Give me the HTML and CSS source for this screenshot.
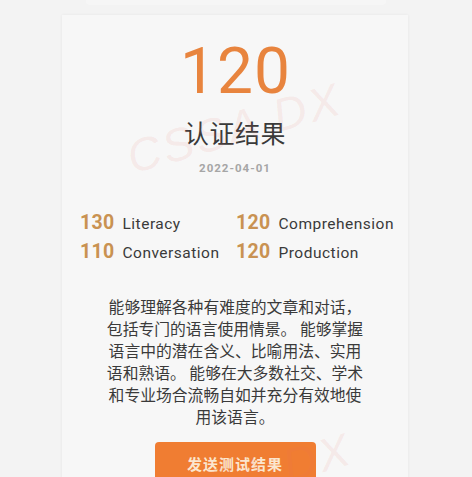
FILE: index.html
```html
<!DOCTYPE html>
<html lang="zh">
<head>
<meta charset="utf-8">
<title>认证结果</title>
<link rel="stylesheet" href="styles.css">
</head>
<body>
<div class="topbar"></div>
<main class="card">
  <div class="score">120</div>
  <h1 class="title">认证结果</h1>
  <div class="date">2022-04-01</div>
  <div class="stats">
    <div class="stat"><span class="num">130</span><span class="label">Literacy</span></div>
    <div class="stat"><span class="num">120</span><span class="label">Comprehension</span></div>
    <div class="stat"><span class="num">110</span><span class="label">Conversation</span></div>
    <div class="stat"><span class="num">120</span><span class="label">Production</span></div>
  </div>
  <p class="desc">能够理解各种有难度的文章和对话，包括专门的语言使用情景。 能够掌握语言中的潜在含义、比喻用法、实用语和熟语。 能够在大多数社交、学术和专业场合流畅自如并充分有效地使用该语言。</p>
  <button class="send">发送测试结果</button>
  <div class="watermark wm1">CSSA DX</div>
  <div class="watermark wm2">CSSA DX</div>
</main>
</body>
</html>
```
FILE: styles.css
```css
html, body {
  margin: 0;
  padding: 0;
}
body {
  background: #f3f3f3;
  height: 477px;
  overflow: hidden;
  font-family: Roboto, "Noto Sans CJK SC", sans-serif;
}
.topbar {
  width: 300px;
  height: 5px;
  margin: 0 auto;
  background: #f6f6f6;
  border-radius: 0 0 4px 4px;
}
.card {
  position: relative;
  width: 346px;
  margin: 10px 0 0 62px;
  height: 480px;
  background: #f7f7f7;
  box-shadow: 0 0 3px rgba(0,0,0,0.06);
  display: flex;
  flex-direction: column;
  align-items: center;
  overflow: hidden;
}
.score {
  margin-top: 25px;
  font-size: 64px;
  line-height: 64px;
  font-weight: 400;
  color: #e8843e;
  letter-spacing: 1px;
  padding-left: 1px;
}
.title {
  margin: 11px 0 0;
  font-family: "Noto Sans CJK SC", sans-serif;
  font-size: 25px;
  line-height: 34px;
  font-weight: 400;
  color: #3a3a3a;
  letter-spacing: 0.5px;
}
.date {
  margin-top: 12px;
  font-size: 11.5px;
  line-height: 14px;
  font-weight: 700;
  color: #a6a6a6;
  letter-spacing: 1px;
}
.stats {
  align-self: stretch;
  margin: 36px 0 0 18px;
  display: grid;
  grid-template-columns: 156px auto;
  row-gap: 4px;
}
.stat {
  display: flex;
  align-items: baseline;
  gap: 8px;
  line-height: 23px;
}
.num {
  font-size: 19.5px;
  font-weight: 700;
  color: #c99252;
  letter-spacing: 0.3px;
}
.label {
  font-size: 15.5px;
  color: #3a3a3a;
  letter-spacing: 0.5px;
}
.desc {
  width: 262px;
  margin: 31px 0 0;
  font-family: "Noto Sans CJK SC", sans-serif;
  font-size: 15.8px;
  line-height: 22px;
  color: #3a3a3a;
  text-align: center;
}
.send {
  margin-top: 14px;
  width: 161px;
  height: 42px;
  border: none;
  border-radius: 4px;
  background: #f07d32;
  color: #fbe6cf;
  font-family: "Noto Sans CJK SC", sans-serif;
  font-size: 15px;
  font-weight: 700;
  letter-spacing: 1px;
  padding: 0;
}
.watermark {
  position: absolute;
  font-family: "Liberation Sans", sans-serif;
  font-style: italic;
  color: rgba(232, 110, 100, 0.11);
  letter-spacing: 3px;
  white-space: nowrap;
  pointer-events: none;
  font-size: 46px;
  transform: rotate(-16deg);
}
.wm1 {
  left: 62px;
  top: 86px;
}
.wm2 {
  left: 72px;
  top: 436px;
}
```
